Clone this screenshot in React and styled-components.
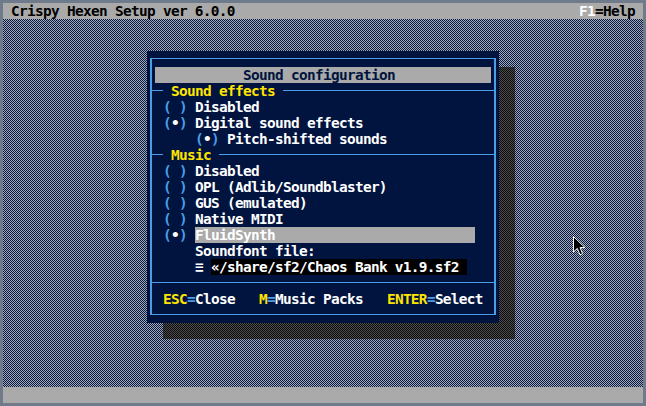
import React from 'react';
import styled, { createGlobalStyle } from 'styled-components';

const GlobalStyle = createGlobalStyle`
  html, body {
    margin: 0;
    padding: 0;
    background: #6f7a8a;
  }
`

const navy = '#00143f';
const cyan = '#4a9ee8';
const yellow = '#ffe400';

const Screen = styled.div`
  width: 640px;
  height: 400px;
  border: 3px solid #6f7a8a;
  display: flex;
  flex-direction: column;
  font-family: 'DejaVu Sans Mono', 'Liberation Mono', monospace;
  font-weight: bold;
  font-size: 14.4px;
  letter-spacing: calc(8px - 0.60205em);
  line-height: 16px;
  white-space: pre;
`

const Bar = styled.div`
  height: 16px;
  background: #aaaaaa;
  color: #000;
  display: flex;
  justify-content: space-between;
  padding: 0 8px;
`

const White = styled.span`
  color: #fff;
`

const Desktop = styled.div`
  flex: 1;
  position: relative;
  padding: 32px 0 0 144px;
  background: conic-gradient(#aaaaaa 0 25%, #00164d 0 50%, #aaaaaa 0 75%, #00164d 0) 0 0 / 2px 2px;
`

const WindowWrap = styled.div`
  position: relative;
  width: 352px;
  height: 272px;
  &::before {
    content: '';
    position: absolute;
    left: 16px;
    top: 16px;
    width: 352px;
    height: 272px;
    background: conic-gradient(#4c4c4c 0 25%, #0c0c0c 0 50%, #4c4c4c 0 75%, #0c0c0c 0) 0 0 / 2px 2px;
  }
`

const Window = styled.div`
  position: relative;
  box-sizing: border-box;
  width: 352px;
  height: 272px;
  padding: 7px 3px 8px 3px;
  background: ${navy};
`

const Frame = styled.div`
  height: 100%;
  box-sizing: border-box;
  border-style: solid;
  border-color: ${cyan};
  border-width: 1px 2px;
  padding: 8px 1px 7px 1px;
  color: #fff;
`

const Title = styled.div`
  height: 16px;
  margin: 0 2px;
  background: #aaaaaa;
  color: ${navy};
  padding-left: 88px;
`

const Separator = styled.div`
  height: 16px;
  margin: 0 -1px;
  background: linear-gradient(to bottom, transparent 7px, ${cyan} 7px 8px, transparent 8px);
`

const SepLabel = styled.span`
  display: inline-block;
  margin-left: 11px;
  padding: 0 8px;
  background: ${navy};
  color: ${yellow};
`

const Row = styled.div`
  height: 16px;
  padding-left: ${p => (p.$indent || 1) * 8 + 2}px;
`

const Paren = styled.span`
  color: ${cyan};
`

const Dot = styled.span`
  color: #fff;
`

const Label = styled.span`
  display: inline-block;
  width: ${p => (p.$cols ? p.$cols * 8 + 'px' : 'auto')};
  background: ${p => (p.$selected ? '#aaaaaa' : 'transparent')};
`

const Field = styled.span`
  display: inline-block;
  width: 256px;
  background: #000;
  color: #fff;
`

const Key = styled.span`
  color: ${yellow};
`

const Eq = styled.span`
  color: ${cyan};
`

const Cursor = styled.svg`
  position: absolute;
  left: 570px;
  top: 217px;
`

function Radio({ on, indent, label, selected }) {
  return (
    <Row $indent={indent}>
      <Paren>(</Paren><Dot>{on ? '•' : ' '}</Dot><Paren>)</Paren>{' '}
      <Label $selected={selected} $cols={selected ? 35 : 0}>{label}</Label>
    </Row>
  )
}

export default function App() {
  return (
    <>
      <GlobalStyle />
      <Screen>
        <Bar>
          <span>Crispy Hexen Setup ver 6.0.0</span>
          <span><White>F1</White>=Help</span>
        </Bar>
        <Desktop>
          <WindowWrap>
            <Window>
              <Frame>
                <Title>Sound configuration</Title>
                <Separator><SepLabel>Sound effects</SepLabel></Separator>
                <Radio label="Disabled" />
                <Radio on label="Digital sound effects" />
                <Radio on indent={5} label="Pitch-shifted sounds" />
                <Separator><SepLabel>Music</SepLabel></Separator>
                <Radio label="Disabled" />
                <Radio label="OPL (Adlib/Soundblaster)" />
                <Radio label="GUS (emulated)" />
                <Radio label="Native MIDI" />
                <Radio on selected label="FluidSynth" />
                <Row $indent={5}>Soundfont file:</Row>
                <Row $indent={5}>≡ <Field>«/share/sf2/Chaos Bank v1.9.sf2 </Field></Row>
                <Separator />
                <Row>
                  <Key>ESC</Key><Eq>=</Eq>Close{'   '}
                  <Key>M</Key><Eq>=</Eq>Music Packs{'   '}
                  <Key>ENTER</Key><Eq>=</Eq>Select
                </Row>
              </Frame>
            </Window>
          </WindowWrap>
          <Cursor width="14" height="21" viewBox="0 0 14 21">
            <path d="M0.5 0.5 V16 L4.3 12.4 L7 18.8 L9.6 17.7 L7 11.6 H12 Z" fill="#000" stroke="#fff" strokeWidth="1" />
          </Cursor>
        </Desktop>
        <Bar />
      </Screen>
    </>
  )
}
